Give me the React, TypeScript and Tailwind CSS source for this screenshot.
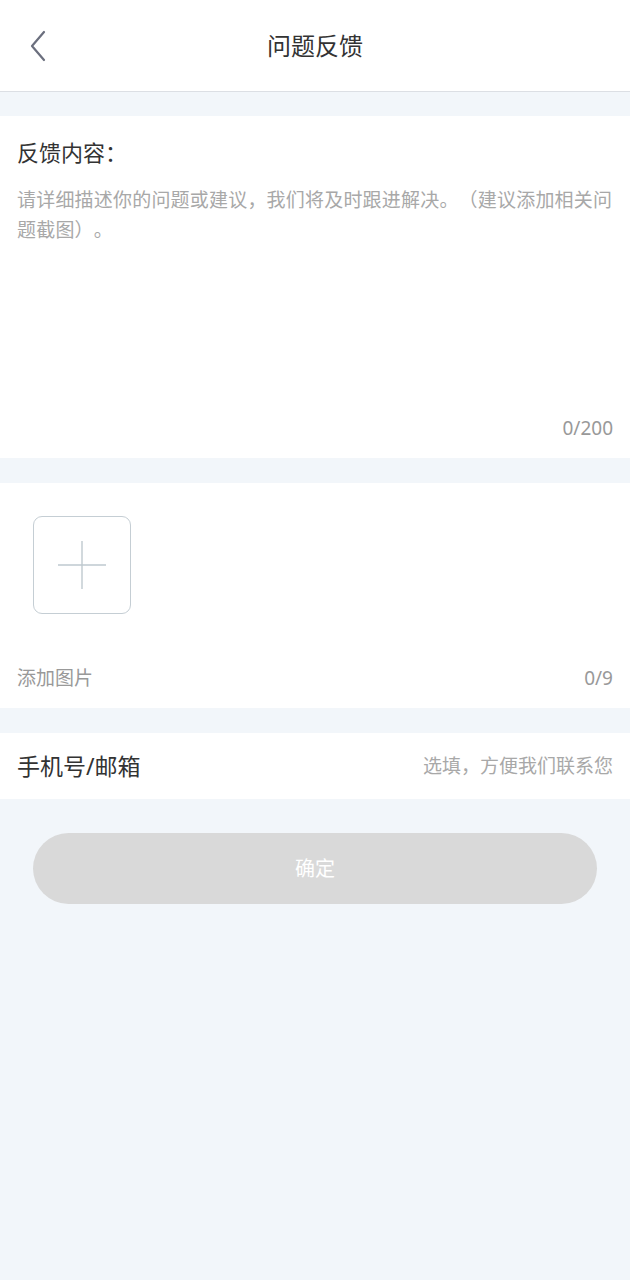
export default function App() {
  return (
    <div
      className="min-h-[1280px] bg-[#f2f6fa] text-[#333] [text-spacing-trim:space-all]"
      style={{ fontFamily: '"Noto Sans", "Noto Sans CJK SC", sans-serif' }}
    >
      {/* header */}
      <div className="relative flex h-[92px] items-center justify-center border-b border-[#dcdfe4] bg-white">
        <button className="absolute left-[26px] top-[30px] flex h-[32px] w-[24px] items-center justify-center">
          <svg width="20" height="32" viewBox="0 0 20 32" fill="none">
            <path d="M16 2 L4 16 L16 30" stroke="#6b6f7e" strokeWidth="2.2" strokeLinecap="round" strokeLinejoin="round" />
          </svg>
        </button>
        <h1 className="text-[24px] leading-none text-[#333]">问题反馈</h1>
      </div>

      {/* feedback content */}
      <div className="mt-[24px] flex h-[342px] flex-col bg-white px-[17px] pt-[20px]">
        <div className="text-[22px] leading-[32px] text-[#333]">反馈内容：</div>
        <p className="mt-[17px] text-[19px] leading-[30px] tracking-[0.2px] text-[#a8a8a8]">
          请详细描述你的问题或建议，我们将及时跟进解决。（建议添加相关问题截图）。
        </p>
        <div className="mt-auto pb-[16px] text-right text-[19px] leading-[28px] text-[#999]">0/200</div>
      </div>

      {/* images */}
      <div className="mt-[25px] flex h-[225px] flex-col bg-white px-[17px] pt-[33px]">
        <div className="ml-[16px] flex h-[98px] w-[98px] items-center justify-center rounded-[9px] border-[1.5px] border-[#c5ced4]">
          <svg width="50" height="50" viewBox="0 0 50 50">
            <path d="M25 1 V49 M1 25 H49" stroke="#bfc9cf" strokeWidth="1.4" />
          </svg>
        </div>
        <div className="mt-auto flex items-center justify-between pb-[16px] text-[19px] leading-[28px] text-[#999]">
          <span>添加图片</span>
          <span>0/9</span>
        </div>
      </div>

      {/* contact */}
      <div className="mt-[25px] flex h-[66px] items-center justify-between bg-white px-[17px]">
        <span className="text-[23px] text-[#333]">手机号/邮箱</span>
        <span className="text-[19px] text-[#a8a8a8]">选填，方便我们联系您</span>
      </div>

      {/* submit */}
      <div className="px-[33px] pt-[34px]">
        <button className="flex h-[71px] w-full items-center justify-center rounded-full bg-[#d9d9d9] text-[20px] text-white">
          确定
        </button>
      </div>
    </div>
  );
}
